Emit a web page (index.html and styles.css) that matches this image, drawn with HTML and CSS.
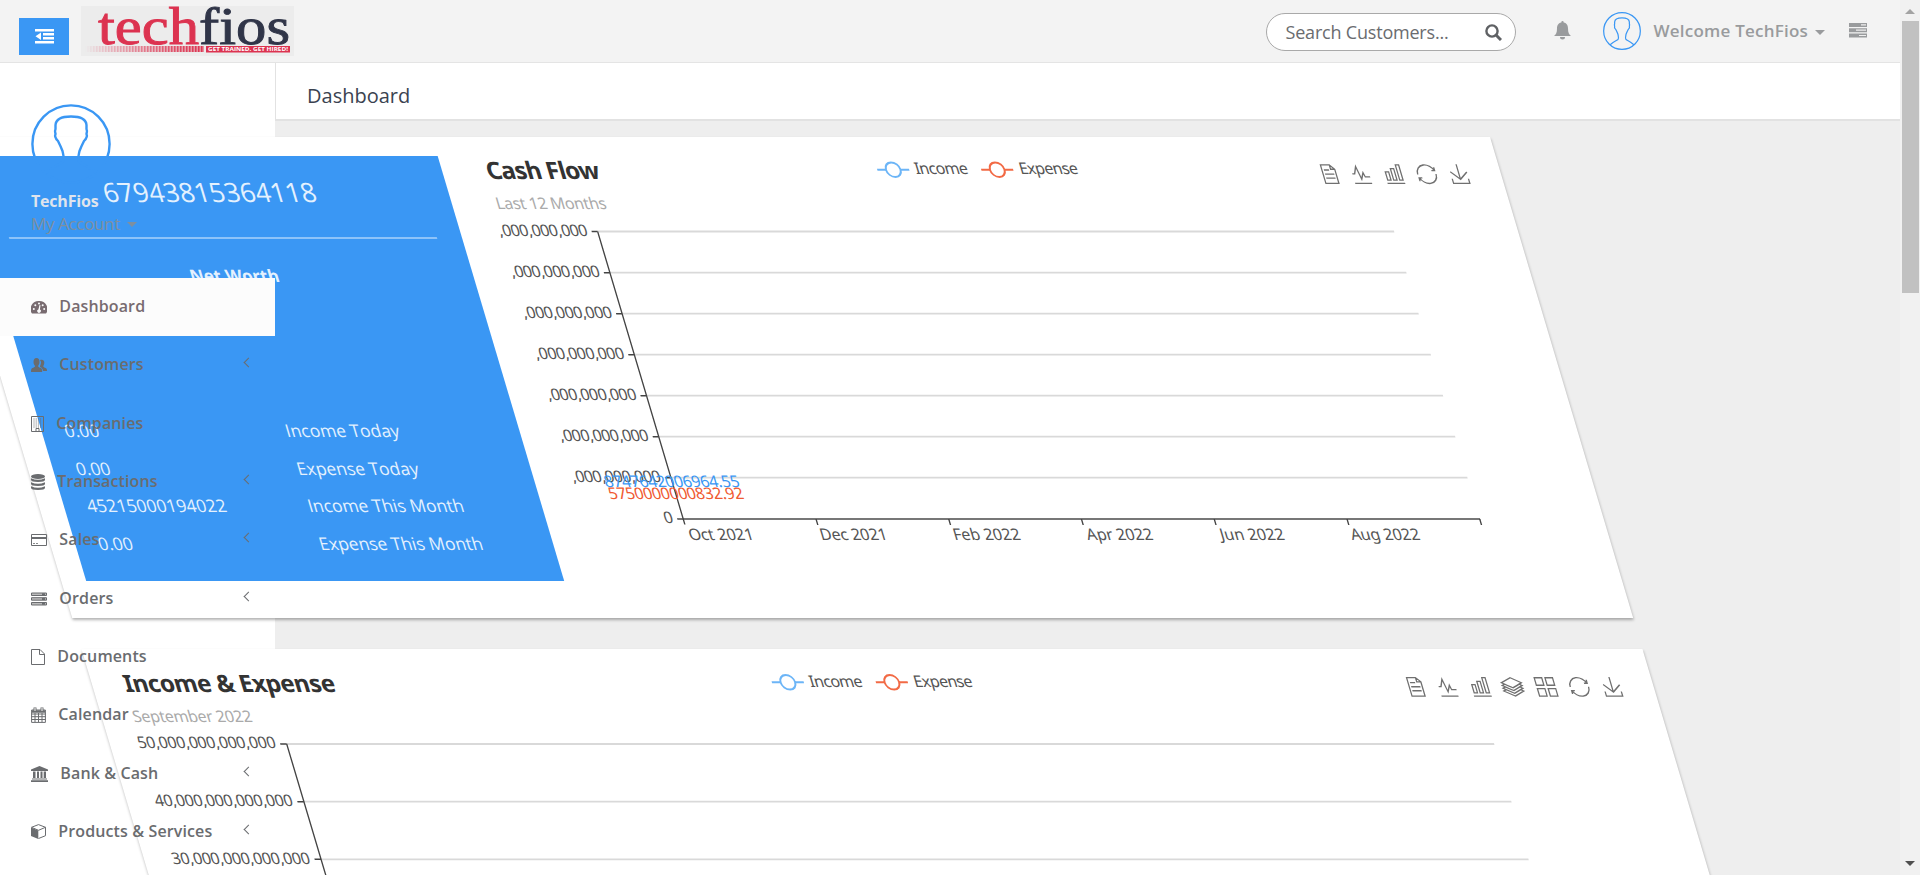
FILE: index.html
```html
<!DOCTYPE html>
<html lang="en">
<head>
<meta charset="utf-8">
<title>Dashboard</title>
<link rel="stylesheet" href="styles.css">
</head>
<body>
<svg class="defs" width="0" height="0" aria-hidden="true">
  <defs>
    <g id="user"><circle cx="40" cy="40" r="38.600"/><path d="M15 69C20 64 29 60 31.500 58C34 55 32 50 31.500 47C30 43 28 39 27 37C25 35 23.500 32 24.500 30Q23.500 27 24.500 25V21C25 14 32 12.500 40 12.500S55 14 55.500 21V25Q56.500 27 55.500 30C56.500 32 55 35 53 37C52 39 50 43 48.500 47C48 50 46 55 48.500 58C51 60 60 64 65 69"/></g>
    <path id="t-data" d="M17.500,17.300H33M45.400,29.500h-28M11.500,2v56H51V14.800L38.400,2H11.500zM38.400,2.200v12.700H51M45.400,41.700h-28"/>
    <path id="t-line" d="M4.100,28.900h7.100l9.300-22l7.400,38l9.700-19.700l3,12.800h14.900M4.100,58h51.400"/>
    <path id="t-bar" d="M6.700,22.900h10V48h-10V22.900zM24.900,13h10v35h-10V13zM43.200,2h10v46h-10V2zM3.100,58h53.700"/>
    <path id="t-stack" d="M8.2,38.4l-8.4,4.1l30.6,15.3L60,42.5l-8.1-4.1l-21.500,11L8.2,38.4z M51.9,30l-8.1,4.2l-13.4,6.9l-13.9-6.9L8.2,30l-8.4,4.2l8.4,4.2l22.2,11l21.500-11l8.1-4.2L51.9,30z M51.9,21.7l-8.1,4.2L35.7,30l-5.3,2.8L24.9,30l-8.4-4.1l-8.3-4.2l-8.4,4.2L8.2,30l8.3,4.2l13.9,6.9l13.4-6.9l8.1-4.2l8.1-4.1L51.9,21.7zM30.4,2.2L-0.2,17.500l8.4,4.1l8.3,4.2l8.4,4.2l5.500,2.7l5.3-2.7l8.1-4.2l8.1-4.2l8.1-4.1L30.4,2.2z"/>
    <path id="t-tile" d="M2.3,2.2h22.8V25H2.3V2.2z M35,2.2h22.8V25H35V2.2zM2.3,35h22.8v22.8H2.3V35z M35,35h22.8v22.8H35V35z"/>
    <path id="t-restore" d="M47,18.9h9.8V8.7 M56.3,20.1 C52.1,9,40.5,0.6,26.8,2.1C12.6,3.7,1.6,16.2,2.1,30.6 M13,41.1H3.1v10.2 M3.7,39.9c4.2,11.1,15.8,19.5,29.5,18 c14.2-1.6,25.2-14.1,24.7-28.5"/>
    <path id="t-save" d="M4.7,22.9L29.3,45.5L54.7,23.4M4.6,43.6L4.6,58L53.8,58L53.8,43.6M29.2,45.1L29.2,0"/>
    <pattern id="bars" width="3" height="6" patternUnits="userSpaceOnUse"><rect width="1.500" height="6" fill="#dc3350"/></pattern>
    <linearGradient id="fade"><stop offset="0" stop-color="#fff" stop-opacity="0"/><stop offset="1" stop-color="#fff"/></linearGradient>
    <mask id="fadeMask"><rect x="4" y="40" width="120" height="7" fill="url(#fade)"/></mask>
  </defs>
</svg>

<div class="app">
  <div class="page">
    <header class="topbar">
      <button class="toggle" aria-label="Toggle menu">
        <svg width="19" height="15" viewBox="0 0 19 15" fill="#fff"><path d="M0 0h19v2.500H0zM8 4h11v2.500H8zM8 8h11v2.500H8zM0 12h19v2.500H0zM6 3.500v7.500L0.500 7.200z"/></svg>
      </button>
      <svg class="logo" width="213" height="50" viewBox="0 0 213 50">
        <text x="17" y="38" textLength="192" lengthAdjust="spacingAndGlyphs" class="logo-text"><tspan class="red">tech</tspan><tspan class="navy">fios</tspan></text>
        <rect x="4" y="40" width="119" height="6" fill="#dc3350" opacity=".5" mask="url(#fadeMask)"/>
        <rect x="4" y="40" width="119" height="6" fill="url(#bars)" mask="url(#fadeMask)"/>
        <rect x="125" y="40" width="84" height="6.500" fill="#dc3350"/>
        <text x="127" y="45.300" textLength="80" lengthAdjust="spacingAndGlyphs" class="logo-tag">GET TRAINED. GET HIRED!</text>
      </svg>
      <div class="tools">
        <div class="search"><span>Search Customers...</span>
          <svg width="17" height="17" viewBox="0 0 17 17" fill="none" stroke="#5f6164"><circle cx="7" cy="7" r="5.600" stroke-width="2.400"/><path d="M11 11l5 5" stroke-width="3"/></svg>
        </div>
        <svg class="bell" width="17" height="19" viewBox="0 0 17 19" fill="#999b9d"><path d="M8.500 0q1.200 0 1.200 1.400C13 2 14 4.500 14 7.500c0 4 1 6 3 7.500H0c2-1.500 3-3.500 3-7.500 0-3 1-5.500 4.300-6.100Q7.300 0 8.500 0zM6 16h5q0 2.500-2.500 2.500T6 16z"/></svg>
        <svg class="mini" width="38" height="38" viewBox="0 0 80 80" fill="none" stroke="#3a97f4" stroke-width="2.600"><use href="#user"/></svg>
        <span class="welcome">Welcome TechFios</span><i class="caret"></i>
        <svg class="tasks" width="18" height="15" viewBox="0 0 18 15"><path fill="#999b9d" d="M0 0h18v4H0zM0 5.300h18v4H0zM0 10.600h18v4H0z"/><path fill="#eee" d="M12 1.300h5v1.200h-5zM7 6.600h10v1.200H7zM10 11.900h7v1.200h-7z"/></svg>
      </div>
    </header>
    <div class="body">
      <aside class="sidebar">
        <svg class="avatar" width="80" height="80" viewBox="0 0 80 80" fill="none" stroke="#3a97f4" stroke-width="2.400"><use href="#user"/></svg>
        <div class="profile">
          <strong>TechFios</strong>
          <div class="account">My Account<i class="caret"></i></div>
        </div>
        <nav class="menu">
          <a class="item active"><svg width="16" height="14" viewBox="0 0 16 14"><path fill="#786b70" d="M8 1a8 8 0 0 1 7 12.500H1A8 8 0 0 1 8 1z"/><g fill="#fcfcfc"><circle cx="2.800" cy="9" r="1"/><circle cx="4.300" cy="5.200" r="1"/><circle cx="8" cy="3.500" r="1"/><circle cx="11.700" cy="5.200" r="1"/><circle cx="13.200" cy="9" r="1"/><path d="M8.500 5l1 .2-.6 4.300a1.800 1.800 0 1 1-1.500-.1z"/></g></svg><span>Dashboard</span></a>
          <a class="item"><svg width="16" height="14" viewBox="0 0 16 14" fill="currentColor"><path d="M5.500 0C7.500 0 8.500 1.500 8.500 4S7.500 7 7.200 8c0 1 .8 1.300 2 1.800 1.600.6 2 1.500 2 4.200H0c0-2.700.3-3.600 2-4.200C3.200 9.300 4 9 4 8 3.500 7 2.500 6.500 2.500 4S3.500 0 5.500 0zM9 2c3-1 4.500.3 4.300 3-.1 1.500-1 2.500-1 3.300s.7 1 1.700 1.400c1.600.6 2 1.300 2 3.300h-4c-.2-2.400-1.200-3.200-3-4 0-2 1-2.500 1-5z"/></svg><span>Customers</span><b></b></a>
          <a class="item"><svg width="13" height="16" viewBox="0 0 13 16" fill="none" stroke="currentColor"><path d="M.5.500h12v15H.5zM5 15v-2.500h3V15"/><path stroke-width="1" stroke-dasharray="1 1.200" d="M2.500 3h8M2.500 5h8M2.500 7h8M2.500 9h8M2.500 11h8"/></svg><span>Companies</span></a>
          <a class="item"><svg width="14" height="16" viewBox="0 0 14 16" fill="currentColor"><ellipse cx="7" cy="2.500" rx="7" ry="2.500"/><path d="M0 4.200q7 3 14 0v1.600q0 2.200-7 2.200T0 5.800zM0 8.200q7 3 14 0v1.600q0 2.200-7 2.200T0 9.800zM0 12.200q7 3 14 0v1.600q0 2.200-7 2.200T0 13.800z"/></svg><span>Transactions</span><b></b></a>
          <a class="item"><svg width="16" height="12" viewBox="0 0 16 12" fill="none" stroke="currentColor"><path d="M.5.500h15v11H.5z"/><path d="M0 4h16" stroke-width="2"/><path d="M2 9.500h6" stroke-dasharray="2 1" stroke-width=".8"/></svg><span>Sales</span><b></b></a>
          <a class="item"><svg width="16" height="14" viewBox="0 0 16 14" fill="none" stroke="currentColor"><path fill="#bbb" d="M.5 1h15v2.500H.5zM.5 5.700h15v2.500H.5zM.5 10.500h15V13H.5z"/><path d="M11 2.300h3M11 7h3M11 11.800h3" stroke-width="2"/></svg><span>Orders</span><b></b></a>
          <a class="item"><svg width="14" height="16" viewBox="0 0 14 16" fill="none" stroke="currentColor"><path d="M.5.500h8.500l4.500 4.500v10.500H.5zM8.500.500v5h5"/></svg><span>Documents</span></a>
          <a class="item"><svg width="15" height="16" viewBox="0 0 15 16" fill="none" stroke="currentColor"><path d="M.6 3h13.800v12.400H.6zM.5 7h14M.5 9.700h14M.5 12.500h14M4 6v9M7.500 6v9M11 6v9"/><path d="M1 4.500h13" stroke-width="2.500"/><path d="M4 .5v4M11 .5v4" stroke-width="3"/><path d="M4 1v3M11 1v3" stroke="#fff"/></svg><span>Calendar</span></a>
          <a class="item"><svg width="17" height="16" viewBox="0 0 17 16" fill="currentColor"><path d="M8.500 0L17 3.500V5H0V3.500zM2 5.500h2.500V12H2zM6 5.500h2V12H6zM9.500 5.500h2V12h-2zM12.700 5.500h2.300V12h-2.300zM1 12.500h15v1H1zM0 14.300h17V16H0z"/></svg><span>Bank &amp; Cash</span><b></b></a>
          <a class="item"><svg width="15" height="15" viewBox="0 0 15 15"><path fill="currentColor" d="M0 3.500L7.300 6.500V15L0 12z"/><path d="M.5 3.300L7.500.600l7 2.700v8.400l-7 2.800M.5 3.300l7 3 7-3" fill="none" stroke="currentColor"/></svg><span>Products &amp; Services</span><b></b></a>
        </nav>
      </aside>
      <main class="main">
        <h1 class="heading">Dashboard</h1>
        <div class="panels">
          <section class="card first">
            <div class="worth">
              <div class="total">67943815364118</div>
              <div class="label">Net Worth</div>
              <dl class="stats">
                <dd>0.00</dd><dt>Income Today</dt>
                <dd>0.00</dd><dt>Expense Today</dt>
                <dd>45215000194022</dd><dt>Income This Month</dt>
                <dd>0.00</dd><dt>Expense This Month</dt>
              </dl>
            </div>
            <svg class="chart" width="1058" height="481" viewBox="503 0 1058 481">
              <text class="title" x="547" y="42.500" textLength="113">Cash Flow</text>
              <text class="sub" x="547" y="72.500" textLength="110">Last 12 Months</text>
              <g class="legend">
                <path class="inc" d="M938.500 32.700h32"/><circle class="inc" cx="954.500" cy="32.700" r="7.300"/><text x="976" y="37.500" textLength="53">Income</text>
                <path class="exp" d="M1042.500 32.700h32"/><circle class="exp" cx="1058.500" cy="32.700" r="7.300"/><text x="1080.500" y="37.500" textLength="58.500">Expense</text>
              </g>
              <g class="tbx">
                <use href="#t-data" transform="translate(1379.300 27.300) scale(.33)"/><use href="#t-line" transform="translate(1411 27.300) scale(.33)"/><use href="#t-bar" transform="translate(1443.700 27.300) scale(.33)"/><use href="#t-restore" transform="translate(1476.900 27.300) scale(.33)"/><use href="#t-save" transform="translate(1509.300 27.300) scale(.33)"/>
              </g>
              <path class="grid" d="M640.500 94.500H1437M640.500 135.700H1437M640.500 176.700H1437M640.500 217.700H1437M640.500 258.700H1437M640.500 299.700H1437M640.500 340.700H1437"/>
              <path class="axisx" d="M634.500 381.900H1437.500"/>
              <path class="axis" d="M640.500 94.500V387.500M773.300 382v6M906 382v6M1038.700 382v6M1171.500 382v6M1304.300 382v6M1437 382v6M634.500 94.500h6M634.500 135.700h6M634.500 176.700h6M634.500 217.700h6M634.500 258.700h6M634.500 299.700h6M634.500 340.700h6"/>
              <g class="lab end">
                <text x="630.500" y="99" textLength="89">,000,000,000</text><text x="630.500" y="140" textLength="89">,000,000,000</text><text x="630.500" y="181" textLength="89">,000,000,000</text><text x="630.500" y="222" textLength="89">,000,000,000</text><text x="630.500" y="263" textLength="89">,000,000,000</text><text x="630.500" y="304" textLength="89">,000,000,000</text><text x="630.500" y="345" textLength="89">,000,000,000</text><text x="630.500" y="386">0</text>
              </g>
              <g class="lab mid">
                <text x="673.500" y="403.500" textLength="65">Oct 2021</text><text x="806" y="403.500" textLength="67">Dec 2021</text><text x="939" y="403.500" textLength="67">Feb 2022</text><text x="1072" y="403.500" textLength="66">Apr 2022</text><text x="1204.500" y="403.500" textLength="64">Jun 2022</text><text x="1337.500" y="403.500" textLength="69">Aug 2022</text>
                <text class="blue" x="640" y="350.500" textLength="135">8747642006964.55</text>
                <text class="orange" x="640.500" y="362.500" textLength="135">5750000000832.92</text>
              </g>
            </svg>
          </section>
          <section class="card">
            <svg class="chart" width="1561" height="481" viewBox="0 0 1561 481">
              <text class="title" x="32" y="43" textLength="211">Income &amp; Expense</text>
              <text class="sub" x="31" y="73.500" textLength="119">September 2022</text>
              <g class="legend">
                <path class="inc" d="M680.500 33.300h32"/><circle class="inc" cx="696.500" cy="33.300" r="7.300"/><text x="718" y="38.300" textLength="53">Income</text>
                <path class="exp" d="M784.500 33.300h32"/><circle class="exp" cx="800.500" cy="33.300" r="7.300"/><text x="822.500" y="38.300" textLength="58.500">Expense</text>
              </g>
              <g class="tbx">
                <use href="#t-data" transform="translate(1312.800 28) scale(.33)"/><use href="#t-line" transform="translate(1344.700 28) scale(.33)"/><use href="#t-bar" transform="translate(1377.500 28) scale(.33)"/><use href="#t-stack" transform="translate(1410 28) scale(.33)"/><use href="#t-tile" transform="translate(1443.400 28) scale(.33)"/><use href="#t-restore" transform="translate(1476.800 28) scale(.33)"/><use href="#t-save" transform="translate(1509.500 28) scale(.33)"/>
              </g>
              <path class="grid" d="M177 95H1384.500M177 152.700H1384.500M177 210.300H1384.500M177 268H1384.500"/>
              <path class="axis" d="M177 94.700V387M170.500 95h6.500M170.500 152.700h6.500M170.500 210.300h6.500"/>
              <g class="lab end">
                <text x="166" y="99.500" textLength="138">50,000,000,000,000</text><text x="166" y="157" textLength="138">40,000,000,000,000</text><text x="166" y="214.700" textLength="138">30,000,000,000,000</text>
              </g>
            </svg>
          </section>
        </div>
      </main>
    </div>
  </div>
  <div class="scroll"><i class="up"></i><div class="thumb"></div><i class="down"></i></div>
</div>
</body>
</html>
```

FILE: styles.css
```css
* { box-sizing: border-box; }
body { margin: 0; font-family: "Open Sans", "Noto Sans", sans-serif; color: #6a6c6f; overflow: hidden; }
.defs { display: block; }
.app { display: flex; height: 875px; overflow: hidden; background: #eee; }
.page { width: 1900px; overflow: hidden; }

.topbar { display: flex; align-items: flex-start; height: 63px; padding: 0 33px 0 19px; background: #f3f3f3; border-bottom: 1px solid #e4e4e4; }
.toggle { display: flex; align-items: center; justify-content: center; width: 50px; height: 37px; margin: 18px 12px 0 0; padding: 0; border: 0; background: #3a97f4; }
.logo { margin-top: 6px; background: #ececec; overflow: visible; }
.logo-text { font: 52px "Liberation Serif", serif; stroke-width: .9px; }
.logo-text .red { fill: #dc3350; stroke: #dc3350; }
.logo-text .navy { fill: #303548; stroke: #303548; }
.logo-tag { font: bold 6px "Open Sans", sans-serif; fill: #fff; }
.tools { display: flex; align-items: center; height: 61px; margin-left: auto; }
.search { display: flex; align-items: center; justify-content: space-between; width: 250px; height: 38px; margin: 3px 38px 0 0; padding: 0 13px 0 19px; border: 1px solid #a9a9a9; border-radius: 19px; background: #fff; font-size: 18px; letter-spacing: -.2px; }
.bell { margin: 0 32px 0 0; }
.mini { margin-right: 13px; }
.welcome { font-size: 17px; font-weight: 600; letter-spacing: .22px; color: #999b9d; white-space: nowrap; }
.caret { display: inline-block; border: 5px solid transparent; border-top-color: currentColor; border-bottom: 0; }
.tools .caret { margin: 3px 24px 0 7px; color: #999b9d; }

.body { display: flex; height: 812px; }
.sidebar { flex: none; width: 275px; padding-top: 41px; background: #fff; }
.avatar { display: block; position: relative; z-index: 2; margin-left: 31px; }
.profile { position: relative; z-index: 2; height: 94px; padding: 5px 0 0 31px; font-size: 16px; line-height: 24px; }
.profile strong { color: #dfe4ed; letter-spacing: -.2px; }
.account { font-size: 17px; line-height: 22px; color: #7e8f9f; letter-spacing: -.35px; }
.account .caret { margin: 0 0 3px 7px; }
.menu { position: relative; z-index: 2; }
.item { display: flex; align-items: center; gap: 13px; height: 58.3px; padding: 0 23px 0 31px; font-size: 16px; font-weight: 600; white-space: nowrap; }
.item span { position: relative; top: -1px; left: -.7px; letter-spacing: .12px; }
.item.active { background: #fcfcfc; color: #786b70; }
.item b { width: 7px; height: 7px; margin: 0 0 5px auto; border: solid #6a6c6f; border-width: 0 0 1px 1px; transform: rotate(45deg); }

.main { flex: none; width: 1625px; }
.heading { height: 58px; margin: 0 0 16px; padding-left: 31px; border: solid #e2e2e2; border-width: 0 0 2px 1px; background: #fff; color: #3a4250; font-size: 20px; font-weight: 400; line-height: 66px; }
.panels { position: relative; z-index: 1; display: flex; flex-direction: column; gap: 31px; width: 1561px; margin-left: -346px; transform: skewX(16.58deg); transform-origin: 0 0; }
.card { height: 481px; background: #fff; box-shadow: 0 2px 3px rgba(0, 0, 0, .3); }
.first { display: flex; }
.worth { width: 478px; height: 425px; margin: 19px 0 0 25px; padding: 18px 25px 0; background: #3a97f4; color: #e4f1fe; }
.total { height: 65px; border-bottom: 2px solid #8dc3f9; font-size: 26.6px; line-height: 37px; text-align: center; }
.label { height: 173px; padding-top: 25px; font-size: 17px; line-height: 24px; font-weight: 700; text-align: center; }
.stats { display: grid; grid-template-columns: 221px 1fr; margin: 0 0 0 -2px; font-size: 17.4px; line-height: 37.7px; white-space: nowrap; }
.stats dd, .stats dt { margin: 0; }
.chart { display: block; flex: none; font: 16px "Noto Sans", "Open Sans", sans-serif; }
.title { font-size: 24px; font-weight: 700; fill: #333; }
.sub { fill: #aaa; }
.legend text { fill: #555; }
.legend path, .legend circle { stroke-width: 2px; fill: #fff; }
.inc { stroke: #6cb5f7; }
.exp { stroke: #f26a45; }
.tbx { fill: none; stroke: #707070; stroke-width: 4px; }
.grid { fill: none; stroke: #d9d9d9; stroke-width: 1.8px; }
.axis { fill: none; stroke: #444; stroke-width: 1.4px; }
.axisx { fill: none; stroke: #777; stroke-width: 2px; }
.lab { fill: #555; }
.end { text-anchor: end; }
.mid { text-anchor: middle; }
.blue { fill: #3a97f4; }
.orange { fill: #f05a32; }

.scroll { display: flex; flex-direction: column; align-items: center; width: 20px; padding: 9px 0; background: #f1f1f1; }
.scroll i { border: 5px solid transparent; }
.scroll .up { border-top: 0; border-bottom-color: #a3a3a3; }
.thumb { width: 17px; height: 272px; margin-top: 7px; background: #c1c1c1; }
.scroll .down { margin-top: auto; border-bottom: 0; border-top-color: #505050; }
```
